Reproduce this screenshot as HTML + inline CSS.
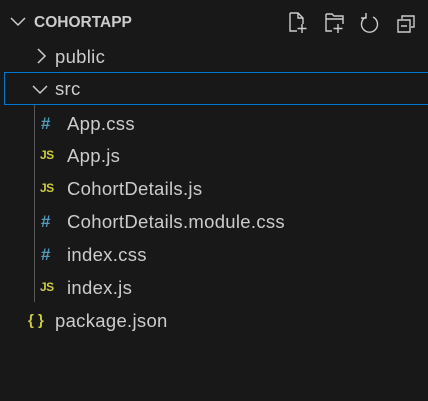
<!DOCTYPE html><html><head><style>
body{margin:0;width:428px;height:401px;background:#181818;overflow:hidden;font-family:"Liberation Sans",sans-serif;color:#cccccc;position:relative}
.r{position:absolute;left:0;height:33px;line-height:33px;font-size:18.5px;letter-spacing:0.3px;white-space:nowrap}
.i{position:absolute;font-weight:bold;font-size:13px;letter-spacing:0}
.js{color:#cbcb41;font-size:12px;letter-spacing:-0.5px}
.h{color:#519aba;font-size:17px}
svg{position:absolute}
</style></head><body>
<svg style="left:10px;top:15px" width="16" height="14"><path d="M1 3 L8 10 L15 3" stroke="#ccc" stroke-width="1.5" fill="none"/></svg>
<div class="r" style="top:6px;left:34px;font-size:15.5px;font-weight:bold;letter-spacing:0">COHORTAPP</div>
<svg style="left:288px;top:11px" width="130" height="24" fill="none" stroke="#ccc" stroke-width="1.4">
<path d="M2 2 H10 L15 7 V13 M2 2 V20 H9 M10 2 V7 H15 M14 13 V22 M9.5 17.5 H18.5"/>
<path d="M38 3 V20 H44 M38 3 H44 L46 5 H55 V13 M38 8 H55 M50 13 V22 M45.5 17.5 H54.5"/>
<path d="M78 6 A8 8 0 1 0 85 6 M78 2 V7 H73"/>
<path d="M114 8 V5 H126 V16 H123 M110 9 H122 V21 H110 Z M113 15 H119"/>
</svg>
<svg style="left:34px;top:48px" width="14" height="16"><path d="M4 1 L11 8 L4 15" stroke="#ccc" stroke-width="1.5" fill="none"/></svg>
<div class="r" style="top:40px;left:55px">public</div>
<div style="position:absolute;left:4px;top:72px;width:430px;height:31px;border:1px solid #0078d4"></div>
<svg style="left:32px;top:84px" width="16" height="12"><path d="M1 2 L8 9 L15 2" stroke="#ccc" stroke-width="1.5" fill="none"/></svg>
<div class="r" style="top:72px;left:55px">src</div>
<div style="position:absolute;left:34px;top:105px;width:1px;height:197px;background:#585858"></div>
<div class="r" style="top:107px"><span class="i h" style="left:41px">#</span><span style="position:absolute;left:67px">App.css</span></div>
<div class="r" style="top:139px"><span class="i js" style="left:40px">JS</span><span style="position:absolute;left:67px">App.js</span></div>
<div class="r" style="top:172px"><span class="i js" style="left:40px">JS</span><span style="position:absolute;left:67px">CohortDetails.js</span></div>
<div class="r" style="top:205px"><span class="i h" style="left:41px">#</span><span style="position:absolute;left:67px">CohortDetails.module.css</span></div>
<div class="r" style="top:238px"><span class="i h" style="left:41px">#</span><span style="position:absolute;left:67px">index.css</span></div>
<div class="r" style="top:271px"><span class="i js" style="left:40px">JS</span><span style="position:absolute;left:67px">index.js</span></div>
<div class="r" style="top:304px"><span class="i" style="left:28px;color:#cbcb41;font-size:15px">{ }</span><span style="position:absolute;left:55px">package.json</span></div>
</body></html>
